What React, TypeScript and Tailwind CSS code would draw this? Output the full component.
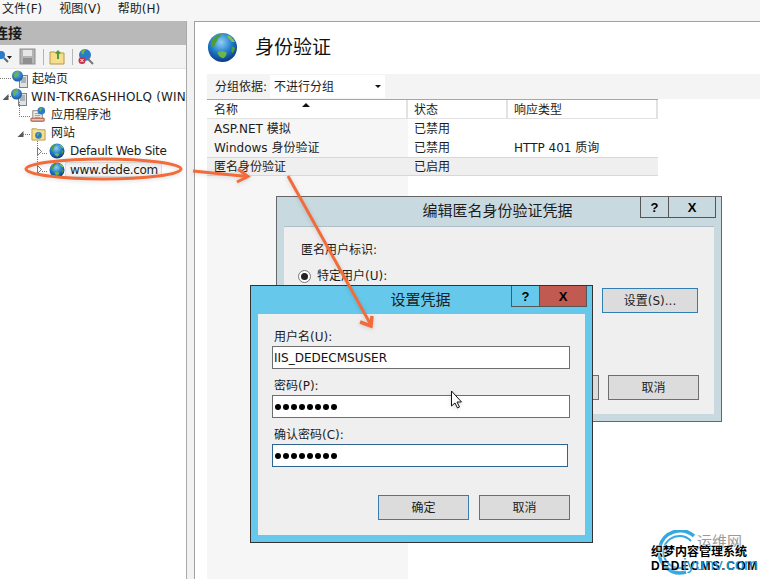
import React from "react";

const cjk = "font-['DejaVu_Sans','Noto_Sans_CJK_SC',sans-serif]";

function Globe({ size, id }: { size: number; id: string }) {
  return (
    <svg width={size} height={size} viewBox="0 0 32 32" className="shrink-0">
      <defs>
        <radialGradient id={id} cx="45%" cy="32%" r="72%">
          <stop offset="0%" stopColor="#8fd0f4" />
          <stop offset="55%" stopColor="#1c78c8" />
          <stop offset="100%" stopColor="#0b2f78" />
        </radialGradient>
      </defs>
      <circle cx="16" cy="16" r="15" fill={`url(#${id})`} />
      <path d="M4 11c2-5 6-8 10-9 1 2 0 3-2 4-2 2-1 4-3 5-1 2-1 4-2 5-2-1-3-3-3-5z" fill="#4f9c38" />
      <path d="M21 3c4 1 6 4 8 7-3 1-4 0-5-2-2-1-3-3-3-5z" fill="#7cc350" />
      <path d="M11 21c3-2 7-1 9 0 1 2-1 5-3 6-3 0-6-3-6-6z" fill="#6db64a" />
      <path d="M26 15c1 0 3 1 3 2-1 3-2 4-3 5-1-2-1-5 0-7z" fill="#4f9c38" />
    </svg>
  );
}

function ServerIcon({ id }: { id: string }) {
  return (
    <svg width="18" height="18" viewBox="0 0 18 18" className="shrink-0">
      <rect x="8.500" y="5.500" width="8" height="12" fill="#dfe3e6" stroke="#7c8288" />
      <path d="M10 8h5M10 10h5M10 12h5" stroke="#7c8288" />
      <defs>
        <radialGradient id={id} cx="45%" cy="35%" r="70%">
          <stop offset="0%" stopColor="#5fb4ec" />
          <stop offset="100%" stopColor="#0f4f9c" />
        </radialGradient>
      </defs>
      <circle cx="6.500" cy="6" r="5.500" fill={`url(#${id})`} />
      <path d="M3 4c1-2 3-3 5-3 0 2-2 2-2 4s-1 3-2 3c-1-1-1-3-1-4z" fill="#6cb544" />
    </svg>
  );
}

function PoolIcon() {
  return (
    <svg width="17" height="17" viewBox="0 0 18 18" className="shrink-0">
      <rect x="3" y="5" width="10" height="11" fill="#f4f1ea" stroke="#8a7f78" />
      <path d="M5 8h6M5 10h6M5 12h6" stroke="#9a9a9a" />
      <path d="M1 13h14v3H1z" fill="#d9c8b8" stroke="#b0523a" />
      <circle cx="12" cy="5" r="4" fill="#2a7cc8" />
      <path d="M10 3c1-1 2-1 3-1 0 2-2 2-2 4-1 0-1-2-1-3z" fill="#6cb544" />
    </svg>
  );
}

function FolderIcon() {
  return (
    <svg width="15" height="15" viewBox="0 0 16 16" className="shrink-0">
      <path d="M1 3h5l1 1h8v11H1z" fill="#f7dd8c" stroke="#b89a48" />
      <circle cx="8" cy="10" r="3.500" fill="#2a7cc8" />
      <path d="M6 9c1-1 2-2 3-2 0 2-1 2-1 3-1 1-2 0-2-1z" fill="#6cb544" />
    </svg>
  );
}

function Expander({ filled }: { filled?: boolean }) {
  return (
    <svg width="7" height="9" viewBox="0 0 7 9" className="shrink-0">
      {filled ? (
        <path d="M6.500 2v6H.5z" fill="#595959" />
      ) : (
        <path d="M1.500 .5l4 4-4 4z" fill="#fff" stroke="#7a7a7a" />
      )}
    </svg>
  );
}

function TreeRow({ indent, children }: { indent: string; children: React.ReactNode }) {
  return <div className={`flex h-[18.2px] items-center text-[12px] leading-none text-[#1c1c1c] ${indent}`}>{children}</div>;
}

function Sidebar() {
  return (
    <aside className="relative flex w-[187px] shrink-0 flex-col overflow-hidden border-r border-[#a9a9a9] bg-white">
      <div className="flex h-[24px] shrink-0 items-center bg-[#b9b9b9] text-[14px] font-bold text-[#1a1a1a]">
        <span className="-ml-[6px]">连接</span>
      </div>
      <div className="flex h-[24px] shrink-0 items-center gap-[3px] border-b border-[#e4e4e4] bg-[#f3f3f3]">
        <svg width="14" height="16" viewBox="0 0 14 16" className="-ml-[2px]">
          <circle cx="3" cy="6" r="4" fill="#2a7cc8" />
          <path d="M6 9l4 4" stroke="#666" strokeWidth="2" />
          <path d="M9 7h5l-2.500 3z" fill="#222" />
        </svg>
        <svg width="18" height="18" viewBox="0 0 18 18" className="ml-[4px]">
          <rect x="1" y="1" width="15" height="15" fill="#b4b4b4" stroke="#8f8f8f" />
          <rect x="4" y="2" width="9" height="6" fill="#e6e6e6" />
          <rect x="4" y="10" width="9" height="6" fill="#8f8f8f" />
        </svg>
        <div className="ml-[3px] h-[16px] w-px bg-[#b5b5b5]" />
        <svg width="16" height="16" viewBox="0 0 16 16" className="ml-[2px]">
          <path d="M1 3h5l1 1h8v11H1z" fill="#f7dd8c" stroke="#b89a48" />
          <path d="M9 1l3 3-2 1v5H8V5L6 4z" fill="#4f9c38" />
        </svg>
        <div className="ml-[4px] h-[16px] w-px bg-[#b5b5b5]" />
        <svg width="18" height="18" viewBox="0 0 18 18" className="ml-[1px]">
          <circle cx="8" cy="7" r="6" fill="#2a7cc8" />
          <path d="M4 4c1-2 3-3 5-3 0 2-2 2-2 4s-2 2-3-1z" fill="#6cb544" />
          <path d="M11 11l5 5" stroke="#777" strokeWidth="2" />
          <circle cx="5" cy="12.500" r="3.500" fill="#c8304a" />
          <path d="M3.500 11l3 3M6.500 11l-3 3" stroke="#fff" />
        </svg>
      </div>
      <div className="flex flex-col pt-[0.5px]">
        <TreeRow indent="pl-[11px]">
          <ServerIcon id="srv-a" />
          <span className="ml-[3px]">起始页</span>
        </TreeRow>
        <TreeRow indent="pl-[2px]">
          <Expander filled />
          <span className="w-[2px]" />
          <ServerIcon id="srv-b" />
          <span className="ml-[3px] whitespace-nowrap tracking-[0.2px]">WIN-TKR6ASHHOLQ (WIN</span>
        </TreeRow>
        <TreeRow indent="pl-[30px]">
          <PoolIcon />
          <span className="ml-[4px]">应用程序池</span>
        </TreeRow>
        <TreeRow indent="pl-[17px]">
          <Expander filled />
          <span className="w-[7px]" />
          <FolderIcon />
          <span className="ml-[5px]">网站</span>
        </TreeRow>
        <TreeRow indent="pl-[36px]">
          <Expander />
          <span className="w-[6px]" />
          <Globe size={16} id="g-a" />
          <span className="ml-[5px] tracking-[-0.25px]">Default Web Site</span>
        </TreeRow>
        <TreeRow indent="pl-[36px]">
          <Expander />
          <span className="w-[6px]" />
          <Globe size={16} id="g-b" />
          <span className="flex h-[15px] items-center border border-[#e0e0e0] bg-[#f4f4f4] pl-[4px] pr-[3px] tracking-[-0.3px]">www.dede.com</span>
        </TreeRow>
      </div>
      <svg className="absolute left-0 top-[48px]" width="60" height="110" viewBox="0 0 60 110">
        <path d="M0 9.500h11M8 27.500h3M19.500 33v14.500H30M23 65.500h7M37.500 72v28M42 84.500h6M42 102.500h6" stroke="#777" strokeDasharray="1 1" fill="none" />
      </svg>
    </aside>
  );
}

function Main() {
  const rows = [
    ["ASP.NET 模拟", "已禁用", ""],
    ["Windows 身份验证", "已禁用", "HTTP 401 质询"],
    ["匿名身份验证", "已启用", ""],
  ];
  return (
    <main className="flex min-w-0 flex-1 flex-col border-l border-t border-[#a0a0a0] bg-white pl-[12px]">
      <div className="flex h-[52px] shrink-0 items-center pb-[2px]">
        <Globe size={31} id="g-main" />
        <h1 className="ml-[17px] text-[19px] font-normal leading-none text-[#111]">身份验证</h1>
      </div>
      <div className="flex h-[25px] shrink-0 items-center bg-[#f4f4f4] pl-[8px] text-[12px] text-[#1c1c1c]">
        <span>分组依据:</span>
        <div className="ml-[3px] flex h-[23px] w-[115px] items-center justify-between bg-white pl-[4px] pr-[4px]">
          <span>不进行分组</span>
          <span className="h-0 w-0 border-x-[3px] border-t-[3px] border-x-transparent border-t-[#111]" />
        </div>
      </div>
      <div className="relative grid w-[451px] shrink-0 grid-cols-[201px_100px_150px] border-t border-[#a6a6a6] text-[12px] text-[#1c1c1c]">
        <div className="flex h-[19px] items-center border-b border-r-2 border-[#e2e2e2] pl-[7px] pt-[1px]">名称</div>
        <div className="flex h-[19px] items-center border-b border-r-2 border-[#e2e2e2] pl-[6px] pt-[1px]">状态</div>
        <div className="flex h-[19px] items-center border-b border-r-2 border-[#e2e2e2] pl-[6px] pt-[1px]">响应类型</div>
        <span className="absolute left-[95px] top-[3px] h-0 w-0 border-x-[4px] border-b-[4px] border-x-transparent border-b-[#111]" />
        {rows.map((r, i) => (
          <React.Fragment key={r[0]}>
            <div className={`flex h-[19px] items-center pl-[7px] ${i === 2 ? "border-y border-[#d8d8d8] bg-[#efefef]" : "bg-[#f6f6f6]"}`}>{r[0]}</div>
            <div className={`flex h-[19px] items-center pl-[6px] ${i === 2 ? "border-y border-[#d8d8d8] bg-[#efefef]" : ""}`}>{r[1]}</div>
            <div className={`flex h-[19px] items-center pl-[6px] ${i === 2 ? "border-y border-[#d8d8d8] bg-[#efefef]" : ""}`}>{r[2]}</div>
          </React.Fragment>
        ))}
      </div>
      <div className="w-[201px] flex-1 bg-[#f6f6f6]" />
    </main>
  );
}

function DialogButton({ children, className }: { children?: React.ReactNode; className: string }) {
  return <div className={`flex items-center justify-center border-[1.5px] bg-[#dcdcdc] text-[12px] text-[#1c1c1c] ${className}`}>{children}</div>;
}

function CaptionButtons({ closeClass, className }: { closeClass: string; className: string }) {
  return (
    <div className={`absolute flex h-[21px] border border-t-0 border-[#555] font-['Liberation_Sans',sans-serif] text-[13px] font-bold leading-none text-black ${className}`}>
      <div className="flex w-[28px] items-center justify-center border-r border-[#555]">?</div>
      <div className={`flex w-[46px] items-center justify-center ${closeClass}`}>X</div>
    </div>
  );
}

function Field({ label, dots, className, width }: { label: string; dots?: boolean; className?: string; width: string }) {
  return (
    <div className="flex flex-col">
      <label className="h-[26px] pl-[2px] pt-[9px] text-[12px] leading-[16px] text-[#1c1c1c]">{label}</label>
      <div className={`flex h-[23px] items-center border-[1.5px] bg-white pl-[1px] pt-[1px] text-[12px] text-[#111] ${width} ${className ?? "border-[#6e6e6e]"}`}>
        {dots ? (
          <span className="flex gap-[2px] pl-[1px]">
            {Array.from({ length: 8 }).map((_, i) => (
              <span key={i} className="h-[6px] w-[6px] rounded-full bg-black" />
            ))}
          </span>
        ) : (
          "IIS_DEDECMSUSER"
        )}
      </div>
    </div>
  );
}

function AnonDialog() {
  return (
    <section className="absolute left-[276px] top-[196px] flex h-[226px] w-[446px] flex-col border-[1.5px] border-[#666] bg-[#c8dae0] px-[7px] pb-[7px]">
      <CaptionButtons closeClass="" className="right-[5px] top-0" />
      <div className="flex h-[29px] shrink-0 items-center justify-center pr-[3px] text-[15px] text-[#1c1c1c]">编辑匿名身份验证凭据</div>
      <div className="relative flex-1 border-t border-[#aebfc8] bg-[#efefef] pl-[17px] pt-[14px] text-[12px] text-[#1c1c1c]">
        <div>匿名用户标识:</div>
        <div className="-ml-[3px] mt-[8px] flex items-center gap-[6px]">
          <span className="flex h-[13px] w-[13px] items-center justify-center rounded-full border border-[#777] bg-white">
            <span className="h-[7px] w-[7px] rounded-full bg-[#222]" />
          </span>
          特定用户(U):
        </div>
        <DialogButton className="absolute left-[318px] top-[61px] h-[25px] w-[96px] border-[#2f7fb5]">设置(S)...</DialogButton>
        <DialogButton className="absolute left-[250px] top-[148px] h-[25px] w-[65px] border-[#6e6e6e]" />
        <DialogButton className="absolute left-[324px] top-[148px] h-[25px] w-[91px] border-[#6e6e6e]">取消</DialogButton>
      </div>
    </section>
  );
}

function CredentialsDialog() {
  return (
    <section className="absolute left-[250px] top-[285px] flex h-[258px] w-[343px] flex-col border-[1.5px] border-[#333] bg-[#66c9ec] px-[7px] pb-[7px]">
      <CaptionButtons closeClass="bg-[#c15a50]" className="right-[5px] top-0" />
      <div className="flex h-[28px] shrink-0 items-center justify-center pr-[2px] text-[15px] text-[#1c1c1c]">设置凭据</div>
      <div className="flex flex-1 flex-col bg-[#efefef] pl-[14px] pt-[6px]">
        <Field label="用户名(U):" width="w-[298px]" />
        <Field label="密码(P):" dots width="w-[298px]" />
        <Field label="确认密码(C):" dots className="border-[#2f6490]" width="w-[296px]" />
        <div className="mt-[28px] flex gap-[10px] pl-[106px]">
          <DialogButton className="h-[25px] w-[91px] border-[#3a7cae]">确定</DialogButton>
          <DialogButton className="h-[25px] w-[91px] border-[#6e6e6e]">取消</DialogButton>
        </div>
      </div>
    </section>
  );
}

function Annotations() {
  return (
    <svg className="pointer-events-none absolute left-0 top-0 drop-shadow-sm" width="760" height="579" viewBox="0 0 760 579">
      <ellipse cx="103.500" cy="169" rx="77.500" ry="10" fill="none" stroke="#f26b3a" strokeWidth="3" />
      <path d="M193 171l54 5.500" stroke="#f26b3a" strokeWidth="3" fill="none" />
      <path d="M238 169l10 7.500-11 5.500" stroke="#f26b3a" strokeWidth="3" fill="none" />
      <path d="M288 176l83 149" stroke="#f26b3a" strokeWidth="3" fill="none" />
      <path d="M360 322l11 4 1-10" stroke="#f26b3a" strokeWidth="3.500" fill="none" />
      <path d="M451.500 391v15l3.500-3 2.500 5 2-1-2.500-5h4.500z" fill="#fff" stroke="#111" />
    </svg>
  );
}

function Watermark() {
  return (
    <div className="absolute left-[650px] top-[530px] h-[49px] w-[110px] overflow-hidden">
      <svg className="absolute left-[6px] top-0" width="46" height="46" viewBox="0 0 46 46">
        <path d="M38 6A21 21 0 1 0 30 42" fill="none" stroke="#35a8e0" strokeWidth="3.500" />
        <path d="M35 11A16 16 0 1 0 29 37" fill="none" stroke="#35a8e0" strokeWidth="2" />
      </svg>
      <span className="absolute left-[47px] top-[5px] whitespace-nowrap text-[15px] leading-none text-[#9a9a9a]">运维网</span>
      <span className="absolute left-[1px] top-[13px] whitespace-nowrap text-[12px] font-bold text-black [text-shadow:0_0_2px_#fff,0_0_2px_#fff]">织梦内容管理系统</span>
      <span className="absolute left-[1px] top-[27px] whitespace-nowrap font-['Liberation_Sans',sans-serif] text-[12px] font-bold tracking-[1.500px] text-black [text-shadow:0_0_2px_#fff]">DEDECMS.COM</span>
      <span className="absolute left-[33px] top-[22px] whitespace-nowrap font-['Liberation_Sans',sans-serif] text-[17px] text-[#1e9ad6]">iyunv.com</span>
    </div>
  );
}

export default function App() {
  return (
    <div className={`relative flex h-[579px] w-[760px] flex-col overflow-hidden bg-white ${cjk}`}>
      <header className="flex h-[21px] shrink-0 items-center gap-[17px] bg-[#f6f6f6] pb-[3px] pl-[2px] text-[12px] text-[#222]">
        <span>文件(F)</span>
        <span>视图(V)</span>
        <span>帮助(H)</span>
      </header>
      <div className="flex min-h-0 flex-1 bg-[#f2f2f2]">
        <Sidebar />
        <div className="w-[7px] shrink-0" />
        <Main />
      </div>
      <AnonDialog />
      <CredentialsDialog />
      <Annotations />
      <Watermark />
    </div>
  );
}
